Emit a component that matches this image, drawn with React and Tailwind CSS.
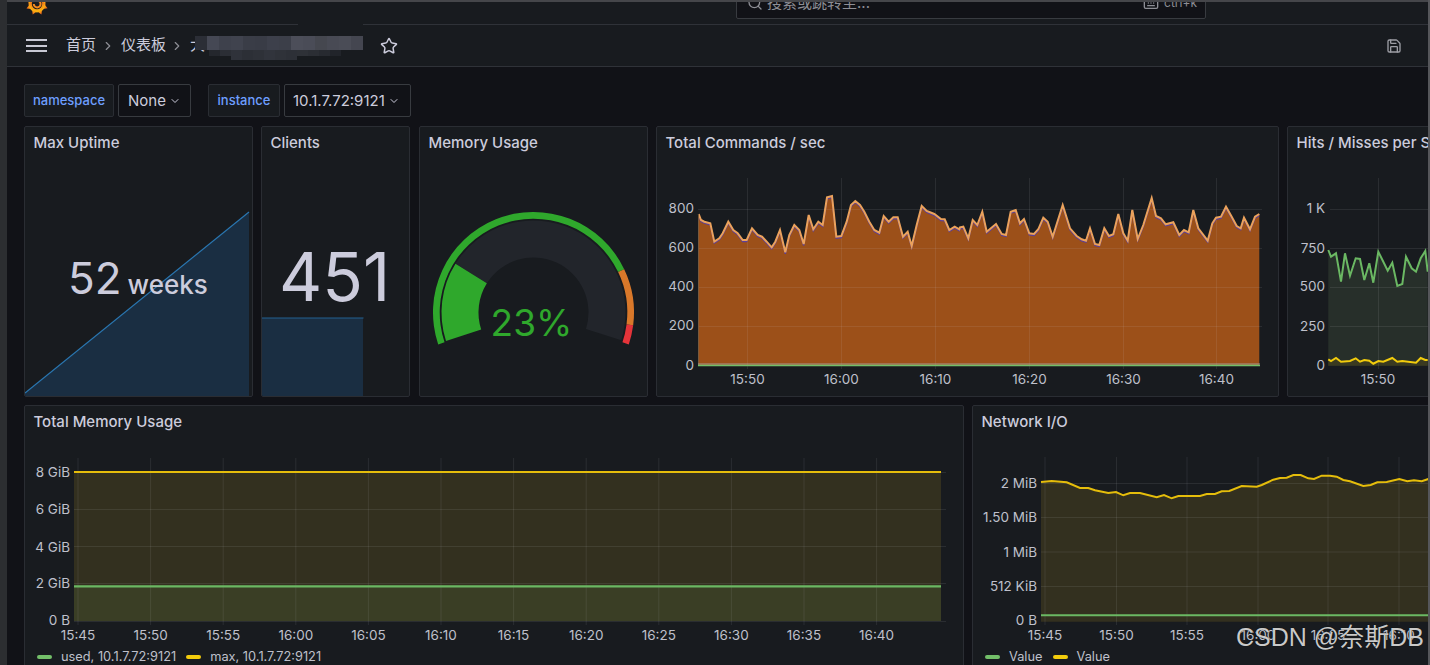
import React from 'react';
import { ChevronRight, ChevronDown, Star, Save, Search, Keyboard } from 'lucide-react';

const AXIS = '#bfc0cb';
const GRID = 'rgba(204,204,220,0.1)';

// points were read off zoomed crops, so scale them back to page pixels
const toPage = (arr, ox, oy) => arr.map(([x, y]) => [ox + x / 3, oy + y / 3]);
const line = (pts, dy = 0) => pts.map(([x, y]) => `${x.toFixed(1)},${(y + dy).toFixed(1)}`).join(' ');
const area = (pts, base) =>
  `${pts[0][0].toFixed(1)},${base} ${line(pts)} ${pts[pts.length - 1][0].toFixed(1)},${base}`;

const commands = [
  ...toPage([[128,132],[135,150],[145,155],[163,160],[175,215],[190,205],[200,190],[217,155],[232,180],[245,190],[260,210],[272,210],[288,175],[305,195],[318,200],[332,215],[347,232],[358,215],[372,180],[388,247],[400,195],[415,165],[430,180],[443,222],[458,135],[472,178],[487,155],[500,165],[513,82],[528,78],[541,200],[556,198],[572,155],[585,105],[598,93],[612,105],[625,125],[640,155],[655,180],[670,188],[683,138],[698,155],[712,142],[725,142],[741,200],[755,185],[767,228],[782,165],[797,108],[812,123],[835,132],[855,147],[866,148],[880,180],[896,170],[910,178]], 656, 170),
  ...toPage([[0,172],[10,170],[25,205],[38,150],[52,165],[67,125],[80,185],[108,162],[125,192],[138,195],[152,125],[167,120],[180,160],[192,147],[208,190],[222,192],[235,178],[250,143],[263,155],[278,200],[308,105],[330,175],[350,198],[365,208],[378,212],[390,175],[405,222],[418,225],[433,175],[447,198],[460,193],[475,132],[490,190],[503,212],[517,120],[533,207],[550,165],[575,84],[588,138],[603,145],[617,163],[640,157],[658,195],[672,180],[686,187],[700,120],[715,175],[743,212],[757,160],[768,143],[783,140],[798,110],[815,140],[830,168],[842,175],[852,143],[870,178],[885,140],[898,132]], 960, 170),
];

const hits = toPage([[175,375],[183,395],[198,385],[213,470],[225,385],[240,452],[257,400],[270,402],[283,465],[298,415],[310,473],[325,380],[340,410],[353,437],[367,413],[382,483],[397,477],[408,395],[425,430],[438,440],[452,400],[466,378],[473,440]], 1270, 125);
const misses = toPage([[175,703],[183,708],[198,699],[213,710],[240,708],[257,700],[270,710],[283,705],[298,707],[310,716],[325,708],[340,710],[367,699],[382,710],[397,708],[438,713],[452,699],[466,705],[473,705]], 1270, 125);
const network = toPage([[243,231],[275,228],[320,232],[360,249],[385,249],[405,256],[445,264],[468,261],[490,271],[510,264],[540,264],[590,277],[612,270],[635,280],[655,273],[720,273],[740,267],[765,267],[785,259],[808,258],[845,243],[890,245],[905,240],[940,224],[960,219],[980,218],[1000,210],[1022,210],[1045,220],[1062,222],[1085,212],[1110,212],[1130,215],[1150,225],[1170,229],[1210,243],[1232,240],[1252,232],[1280,231],[1318,222],[1342,229],[1362,226],[1385,229],[1405,222]], 960, 405);

const Panel = ({ title, className, children }) => (
  <div className={`relative flex shrink-0 flex-col overflow-hidden rounded-[2px] border border-[#2a2d33] bg-[#181b1f] ${className}`}>
    <div className="flex h-[32px] shrink-0 items-center whitespace-nowrap pl-[8.5px] text-[15px] font-medium text-[#ccccdc]">{title}</div>
    {children}
  </div>
);

// the viewBox uses page coordinates, handy when comparing with the reference
const Plot = ({ x, y, w, h, children }) => (
  <svg className="block shrink-0" width={w} height={h} viewBox={`${x} ${y} ${w} ${h}`} fontSize="13.5">
    {children}
  </svg>
);

const YLabel = ({ x, y, children }) => (
  <text x={x} y={y} textAnchor="end" dominantBaseline="central" fill={AXIS}>{children}</text>
);
const XLabel = ({ x, y, children }) => (
  <text x={x} y={y} textAnchor="middle" dominantBaseline="central" fill={AXIS}>{children}</text>
);
const HLines = ({ ys, x1, x2 }) => ys.map((y) => <line key={y} x1={x1} x2={x2} y1={y} y2={y} stroke={GRID} />);
const VLines = ({ xs, y1, y2 }) => xs.map((x) => <line key={x} x1={x} x2={x} y1={y1} y2={y2} stroke={GRID} />);

const Legend = ({ items }) => (
  <div className="flex h-[22px] items-center pl-[12px] text-[12.8px] text-[#bfc0cb]">
    {items.map(([color, label], i) => (
      <div key={i} className="mr-[10px] flex items-center whitespace-nowrap">
        <span className={`mr-[9px] h-[4px] w-[15px] rounded-full ${color}`} />
        {label}
      </div>
    ))}
  </div>
);

const VarLabel = ({ children, className }) => (
  <div className={`flex h-[33px] items-center justify-center rounded-[2px] border border-[#2a2d33] bg-[#181b1f] pt-px text-[13px] font-medium text-[#6e9fff] ${className}`}>
    {children}
  </div>
);
const VarValue = ({ children, className }) => (
  <div className={`flex h-[33px] items-center gap-[3px] rounded-[2px] border border-[#383b40] bg-[#111217] pl-[8px] pt-px text-[15px] text-[#ccccdc] ${className}`}>
    {children}
    <ChevronDown size={12} strokeWidth={2} />
  </div>
);

const CX = 533.5;
const CY = 312.5;
const polar = (deg, r) => {
  const a = (deg * Math.PI) / 180;
  return `${(CX + r * Math.cos(a)).toFixed(2)} ${(CY + r * Math.sin(a)).toFixed(2)}`;
};
const band = (a1, a2, r1, r2) => {
  const large = a2 - a1 > 180 ? 1 : 0;
  return `M${polar(a1, r2)} A${r2} ${r2} 0 ${large} 1 ${polar(a2, r2)} L${polar(a2, r1)} A${r1} ${r1} 0 ${large} 0 ${polar(a1, r1)} Z`;
};

const Gauge = () => (
  <Plot x={420} y={159} w={227} h={237}>
    <path d={band(161.5, 334.5, 93.8, 100.5)} fill="#2fa82c" />
    <path d={band(334.5, 367.3, 93.8, 100.5)} fill="#d9782a" />
    <path d={band(367.3, 378.5, 93.8, 100.5)} fill="#e5343a" />
    <path d={band(212, 377.5, 55, 92)} fill="#22252b" />
    <path d={band(162, 212, 55, 92)} fill="#2fa82c" />
    <text x={531.5} y={335.5} textAnchor="middle" fontSize="37" fill="#2fa82c">23%</text>
  </Plot>
);

const Logo = () => (
  <svg className="-mt-[10px] ml-[18px] shrink-0" width="24" height="24" viewBox="0 0 24 24">
    <defs>
      <linearGradient id="grafana" x1="0" y1="1" x2="0" y2="0">
        <stop offset="0" stopColor="#fbb80f" />
        <stop offset="1" stopColor="#f0561f" />
      </linearGradient>
    </defs>
    <g fill="url(#grafana)">
      <circle cx="12" cy="12" r="8.5" />
      {[0, 45, 90, 135, 180, 225, 270, 315].map((a) => (
        <path key={a} d="M9.5 5 L12 0.6 L14.5 5 Z" transform={`rotate(${a + 22} 12 12)`} />
      ))}
    </g>
    <circle cx="12" cy="12" r="5.2" fill="#181b1f" />
    <path d="M8.8 12 A3.4 3.4 0 1 0 12.2 8.6" fill="none" stroke="#f58a1f" strokeWidth="2" />
  </svg>
);

// pixelated privacy smear over the dashboard name
const topCells = ['#2b2e36', '#454854', '#3e414c', '#40434e', '#3a3d47', '#393c46', '#3d404b', '#3c3f49', '#4c4e59', '#4a4c57', '#45474f', '#484a54', '#4a4c56', '#444650'];
const lowCells = ['#24272d', '#2b2e35', '#2f323a', '#2c2f36', '#2e3138', '#31343c', '#2f3239', '#2d3037', '#2e3137', '#2b2e34', '#272a30', '#21242a'];

const Smear = () => (
  <svg className="absolute left-[188px] top-[11px]" width="170" height="25" viewBox="0 0 170 25">
    {topCells.map((c, i) => <rect key={i} x={i * 12} y="0" width="12" height="14" fill={c} />)}
    {lowCells.map((c, i) => <rect key={i} x={14 + i * 11} y="14" width="11" height={i > 1 && i < 8 ? 10 : 6} fill={c} />)}
  </svg>
);

const memTimes = ['15:45','15:50','15:55','16:00','16:05','16:10','16:15','16:20','16:25','16:30','16:35','16:40'];
const memXs = memTimes.map((_, i) => 78 + i * 72.6);
const cmdXs = [747.5, 841.5, 935.5, 1029.5, 1123.5, 1216.5];
const netXs = [1045, 1116.5, 1187, 1258, 1328, 1399];

export default function App() {
  return (
    <div className="flex h-[665px] w-[1430px] overflow-hidden bg-[#111217] font-['Inter','Noto_Sans_CJK_SC',sans-serif]">
      <div className="h-full w-[7px] shrink-0 bg-[#2c2e31]" />
      <div className="flex h-full w-[1421px] shrink-0 flex-col">
        <div className="h-[2px] shrink-0 bg-[#45464a]" />

        {/* top bar, search box is cut off by the screenshot */}
        <div className="flex h-[23px] shrink-0 items-start overflow-hidden border-b border-[#2f3238] bg-[#181b1f]">
          <Logo />
          <div className="-mt-[15px] ml-[687px] flex h-[32px] w-[470px] shrink-0 items-center rounded-[2px] border border-[#383b40] bg-[#111217] pl-[10px] pr-[8px] text-[15px] text-[#8d8e95]">
            <Search size={16} />
            <span className="ml-[4px] flex-1">搜索或跳转至...</span>
            <Keyboard size={16} />
            <span className="ml-[5px] text-[12px]">ctrl+k</span>
          </div>
        </div>

        {/* breadcrumb toolbar */}
        <div className="relative flex h-[42px] shrink-0 items-center border-b border-[#2f3238] bg-[#181b1f] pl-[19px] pr-[26px] text-[15px] text-[#ccccdc]">
          <div className="flex w-[21px] shrink-0 flex-col gap-[3.5px]">
            <span className="h-[2px] bg-[#c8c9d4]" />
            <span className="h-[2px] bg-[#c8c9d4]" />
            <span className="h-[2px] bg-[#c8c9d4]" />
          </div>
          <span className="ml-[19px]">首页</span>
          <ChevronRight size={14} className="ml-[5px] mr-[6px] text-[#8d8e95]" />
          <span>仪表板</span>
          <ChevronRight size={14} className="ml-[4px] mr-[6px] text-[#8d8e95]" />
          <span>大</span>
          <Star size={18} className="ml-[175px]" />
          <Save size={16} className="ml-auto text-[#9d9ea5]" />
          <Smear />
          <div className="absolute left-[291px] top-[-1px] h-px w-[65px] bg-[#181b1f]" />
        </div>

        {/* template variables */}
        <div className="flex shrink-0 items-center pl-[17px] pt-[17px]">
          <VarLabel className="w-[90px]">namespace</VarLabel>
          <VarValue className="ml-[4px] w-[73px] pl-[9px]">None</VarValue>
          <VarLabel className="ml-[17px] w-[72px]">instance</VarLabel>
          <VarValue className="ml-[4px] w-[127px]">10.1.7.72:9121</VarValue>
        </div>

        <div className="mt-[9px] flex h-[271px] shrink-0 gap-[8px] overflow-hidden pl-[17px]">
          <Panel title="Max Uptime" className="w-[229px]">
            <Plot x={25} y={159} w={227} h={237}>
              <polygon points="25,393 249,212 249,396 25,396" fill="#1a2e42" />
              <line x1={25} y1={393} x2={249} y2={212} stroke="#2a76b0" strokeWidth="1.2" />
            </Plot>
            <div className="absolute left-[43px] top-[125px] flex items-baseline whitespace-nowrap text-[#ccccdc]">
              <span className="text-[44px] leading-[52px]">52</span>
              <span className="ml-[6px] text-[26px] font-medium leading-[52px]">weeks</span>
            </div>
          </Panel>

          <Panel title="Clients" className="w-[149px]">
            <Plot x={262} y={159} w={147} h={237}>
              <rect x={262} y={318} width={101} height={78} fill="#1a2e42" />
              <line x1={262} y1={318} x2={363.5} y2={318} stroke="#23608f" strokeWidth="1.2" />
            </Plot>
            <div className="absolute left-[17px] top-[110px] text-[67px] leading-[80px] text-[#ccccdc]">451</div>
          </Panel>

          <Panel title="Memory Usage" className="ml-px w-[229px]">
            <Gauge />
          </Panel>

          <Panel title="Total Commands / sec" className="w-[623px]">
            <Plot x={657} y={159} w={621} h={237}>
              <polygon points={area(commands, 365)} fill="#9c5019" />
              <HLines ys={[209.5, 248.5, 287.5, 326.5]} x1={698} x2={1262} />
              <VLines xs={cmdXs} y1={178} y2={369} />
              <polyline points={line(commands, 1.5)} fill="none" stroke="#5a3f9c" strokeWidth="1.4" />
              <polyline points={line(commands)} fill="none" stroke="#eba25c" strokeWidth="2" />
              <line x1={698.5} y1={commands[0][1]} x2={698.5} y2={365} stroke="#7a5a3c" />
              <line x1={698} x2={1260} y1={364} y2={364} stroke="#a8a9ad" strokeWidth="0.8" />
              <line x1={698} x2={1260} y1={365.5} y2={365.5} stroke="#73bf69" strokeWidth="1.6" />
              <YLabel x={694} y={208}>800</YLabel>
              <YLabel x={694} y={247}>600</YLabel>
              <YLabel x={694} y={286}>400</YLabel>
              <YLabel x={694} y={325}>200</YLabel>
              <YLabel x={694} y={365}>0</YLabel>
              {['15:50','16:00','16:10','16:20','16:30','16:40'].map((t, i) => (
                <XLabel key={t} x={cmdXs[i]} y={379}>{t}</XLabel>
              ))}
            </Plot>
          </Panel>

          <Panel title="Hits / Misses per Sec" className="w-[623px]">
            <Plot x={1288} y={159} w={621} h={237}>
              <polygon points={area(hits, 365.7)} fill="#272f2a" />
              <polygon points={area(misses, 365.7)} fill="#3a3a20" />
              <HLines ys={[209.5, 248.5, 287.5, 326.5]} x1={1330} x2={1430} />
              <VLines xs={[1378.5]} y1={178} y2={369} />
              <polyline points={line(hits)} fill="none" stroke="#6bb863" strokeWidth="2" />
              <polyline points={line(misses)} fill="none" stroke="#f2cc0c" strokeWidth="2" />
              <YLabel x={1325} y={208}>1 K</YLabel>
              <YLabel x={1325} y={247.5}>750</YLabel>
              <YLabel x={1325} y={286}>500</YLabel>
              <YLabel x={1325} y={325.5}>250</YLabel>
              <YLabel x={1325} y={365}>0</YLabel>
              <XLabel x={1378} y={379}>15:50</XLabel>
            </Plot>
          </Panel>
        </div>

        <div className="mt-[8px] flex min-h-0 flex-1 gap-[8px] overflow-hidden pl-[17px]">
          <Panel title="Total Memory Usage" className="h-[290px] w-[940px]">
            <Plot x={25} y={438} w={938} h={208}>
              <rect x={74} y={472} width={867} height={114} fill="#33301f" />
              <rect x={74} y={586} width={867} height={35} fill="#3a3e25" />
              <HLines ys={[509.5, 546.5, 583.5, 621.5]} x1={74} x2={946} />
              <line x1={941} x2={946} y1={472.5} y2={472.5} stroke={GRID} />
              <VLines xs={memXs} y1={458} y2={625} />
              <line x1={74} x2={941} y1={472} y2={472} stroke="#e5bd0b" strokeWidth="2.2" />
              <line x1={74} x2={941} y1={586.3} y2={586.3} stroke="#6bb863" strokeWidth="2.2" />
              <YLabel x={70} y={472}>8 GiB</YLabel>
              <YLabel x={70} y={509}>6 GiB</YLabel>
              <YLabel x={70} y={547}>4 GiB</YLabel>
              <YLabel x={70} y={583}>2 GiB</YLabel>
              <YLabel x={70} y={620}>0 B</YLabel>
              {memTimes.map((t, i) => <XLabel key={t} x={memXs[i]} y={634.5}>{t}</XLabel>)}
            </Plot>
            <Legend items={[['bg-[#73bf69]', 'used, 10.1.7.72:9121'], ['bg-[#f2cc0c]', 'max, 10.1.7.72:9121']]} />
          </Panel>

          <Panel title="Network I/O" className="h-[290px] w-[900px]">
            <Plot x={973} y={438} w={898} h={208}>
              <polygon points={area(network, 621.7)} fill="#33301f" />
              <HLines ys={[483.5, 517.5, 552, 586.5]} x1={1041} x2={1430} />
              <VLines xs={netXs} y1={457} y2={625} />
              <polyline points={line(network)} fill="none" stroke="#e5bd0b" strokeWidth="2" />
              <line x1={1041} x2={1430} y1={615.3} y2={615.3} stroke="#6bb863" strokeWidth="2" />
              <YLabel x={1037} y={482.5}>2 MiB</YLabel>
              <YLabel x={1037} y={517}>1.50 MiB</YLabel>
              <YLabel x={1037} y={551.5}>1 MiB</YLabel>
              <YLabel x={1037} y={585.5}>512 KiB</YLabel>
              <YLabel x={1037} y={620}>0 B</YLabel>
              {['15:45','15:50','15:55','16:00','16:05','16:10'].map((t, i) => (
                <XLabel key={t} x={netXs[i]} y={634.5}>{t}</XLabel>
              ))}
            </Plot>
            <Legend items={[['bg-[#73bf69]', 'Value'], ['bg-[#f2cc0c]', 'Value']]} />
          </Panel>
        </div>
      </div>
      <div className="h-full w-[2px] shrink-0 bg-[#55565a]" />

      {/* CSDN watermark on top of the screenshot */}
      <div className="absolute left-[1236px] top-[622px] whitespace-nowrap font-['Liberation_Sans','Noto_Sans_CJK_SC',sans-serif] text-[25px] leading-[30px] text-[#c9c9c9] [text-shadow:0_0_1px_#000]">CSDN @奈斯DB</div>
    </div>
  );
}
